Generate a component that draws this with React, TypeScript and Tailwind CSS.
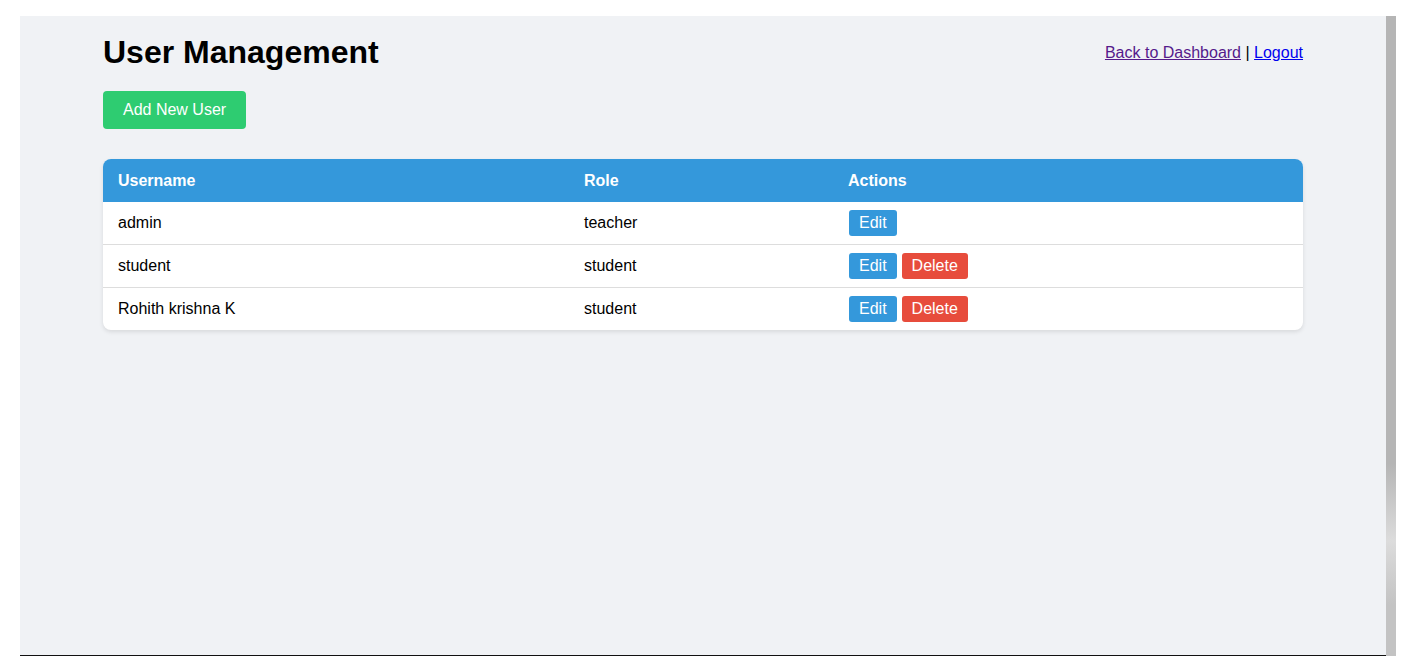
import React from 'react';

interface UserRow {
  username: string;
  role: string;
  canDelete: boolean;
}

const users: UserRow[] = [
  { username: 'admin', role: 'teacher', canDelete: false },
  { username: 'student', role: 'student', canDelete: true },
  { username: 'Rohith krishna K', role: 'student', canDelete: true },
];

export default function App() {
  return (
    <div
      className="w-[1416px] h-[672px] bg-white pt-4 pl-5 flex items-start text-black"
      style={{ fontFamily: '"Liberation Sans", Arial, sans-serif' }}
    >
      <div className="w-[1366px] h-[640px] bg-[#f0f2f5] border-b border-[#111]">
        <div className="w-[1200px] mx-auto pt-[18px]">
          <div className="flex items-center justify-between mb-5">
            <h1 className="text-[32px] leading-[37px] font-bold">User Management</h1>
            <div className="text-base leading-[18px]">
              <a href="#" className="underline text-[#551a8b]">Back to Dashboard</a>
              {' | '}
              <a href="#" className="underline text-[#0000ee]">Logout</a>
            </div>
          </div>

          <button className="bg-[#2ecc71] text-white text-base leading-[18px] px-5 py-[10px] rounded-[4px] mb-[30px]">
            Add New User
          </button>

          <div className="bg-white rounded-lg shadow-[0_2px_4px_rgba(0,0,0,0.1)] overflow-hidden">
            <div className="flex h-[43px] items-center bg-[#3498db] text-white font-bold text-base">
              <div className="w-[466px] px-[15px]">Username</div>
              <div className="w-[264px] px-[15px]">Role</div>
              <div className="flex-1 px-[15px]">Actions</div>
            </div>
            {users.map((u, i) => (
              <div
                key={u.username}
                className={
                  'flex items-center text-base ' +
                  (i < users.length - 1 ? 'h-[43px] border-b border-[#ddd]' : 'h-[42px]')
                }
              >
                <div className="w-[466px] px-[15px]">{u.username}</div>
                <div className="w-[264px] px-[15px]">{u.role}</div>
                <div className="flex-1 px-[15px] pl-[16px] flex gap-[5px]">
                  <button className="bg-[#3498db] text-white text-base leading-[18px] px-[10px] py-1 rounded-[3px]">
                    Edit
                  </button>
                  {u.canDelete && (
                    <button className="bg-[#e74c3c] text-white text-base leading-[18px] px-[10px] py-1 rounded-[3px]">
                      Delete
                    </button>
                  )}
                </div>
              </div>
            ))}
          </div>
        </div>
      </div>
      <div className="w-[10px] h-[640px] bg-[linear-gradient(to_bottom,#b5b5b5_0%,#b5b5b5_70%,#dcdcdc_82%,#c3c3c3_92%,#c3c3c3_100%)]" />
    </div>
  );
}
